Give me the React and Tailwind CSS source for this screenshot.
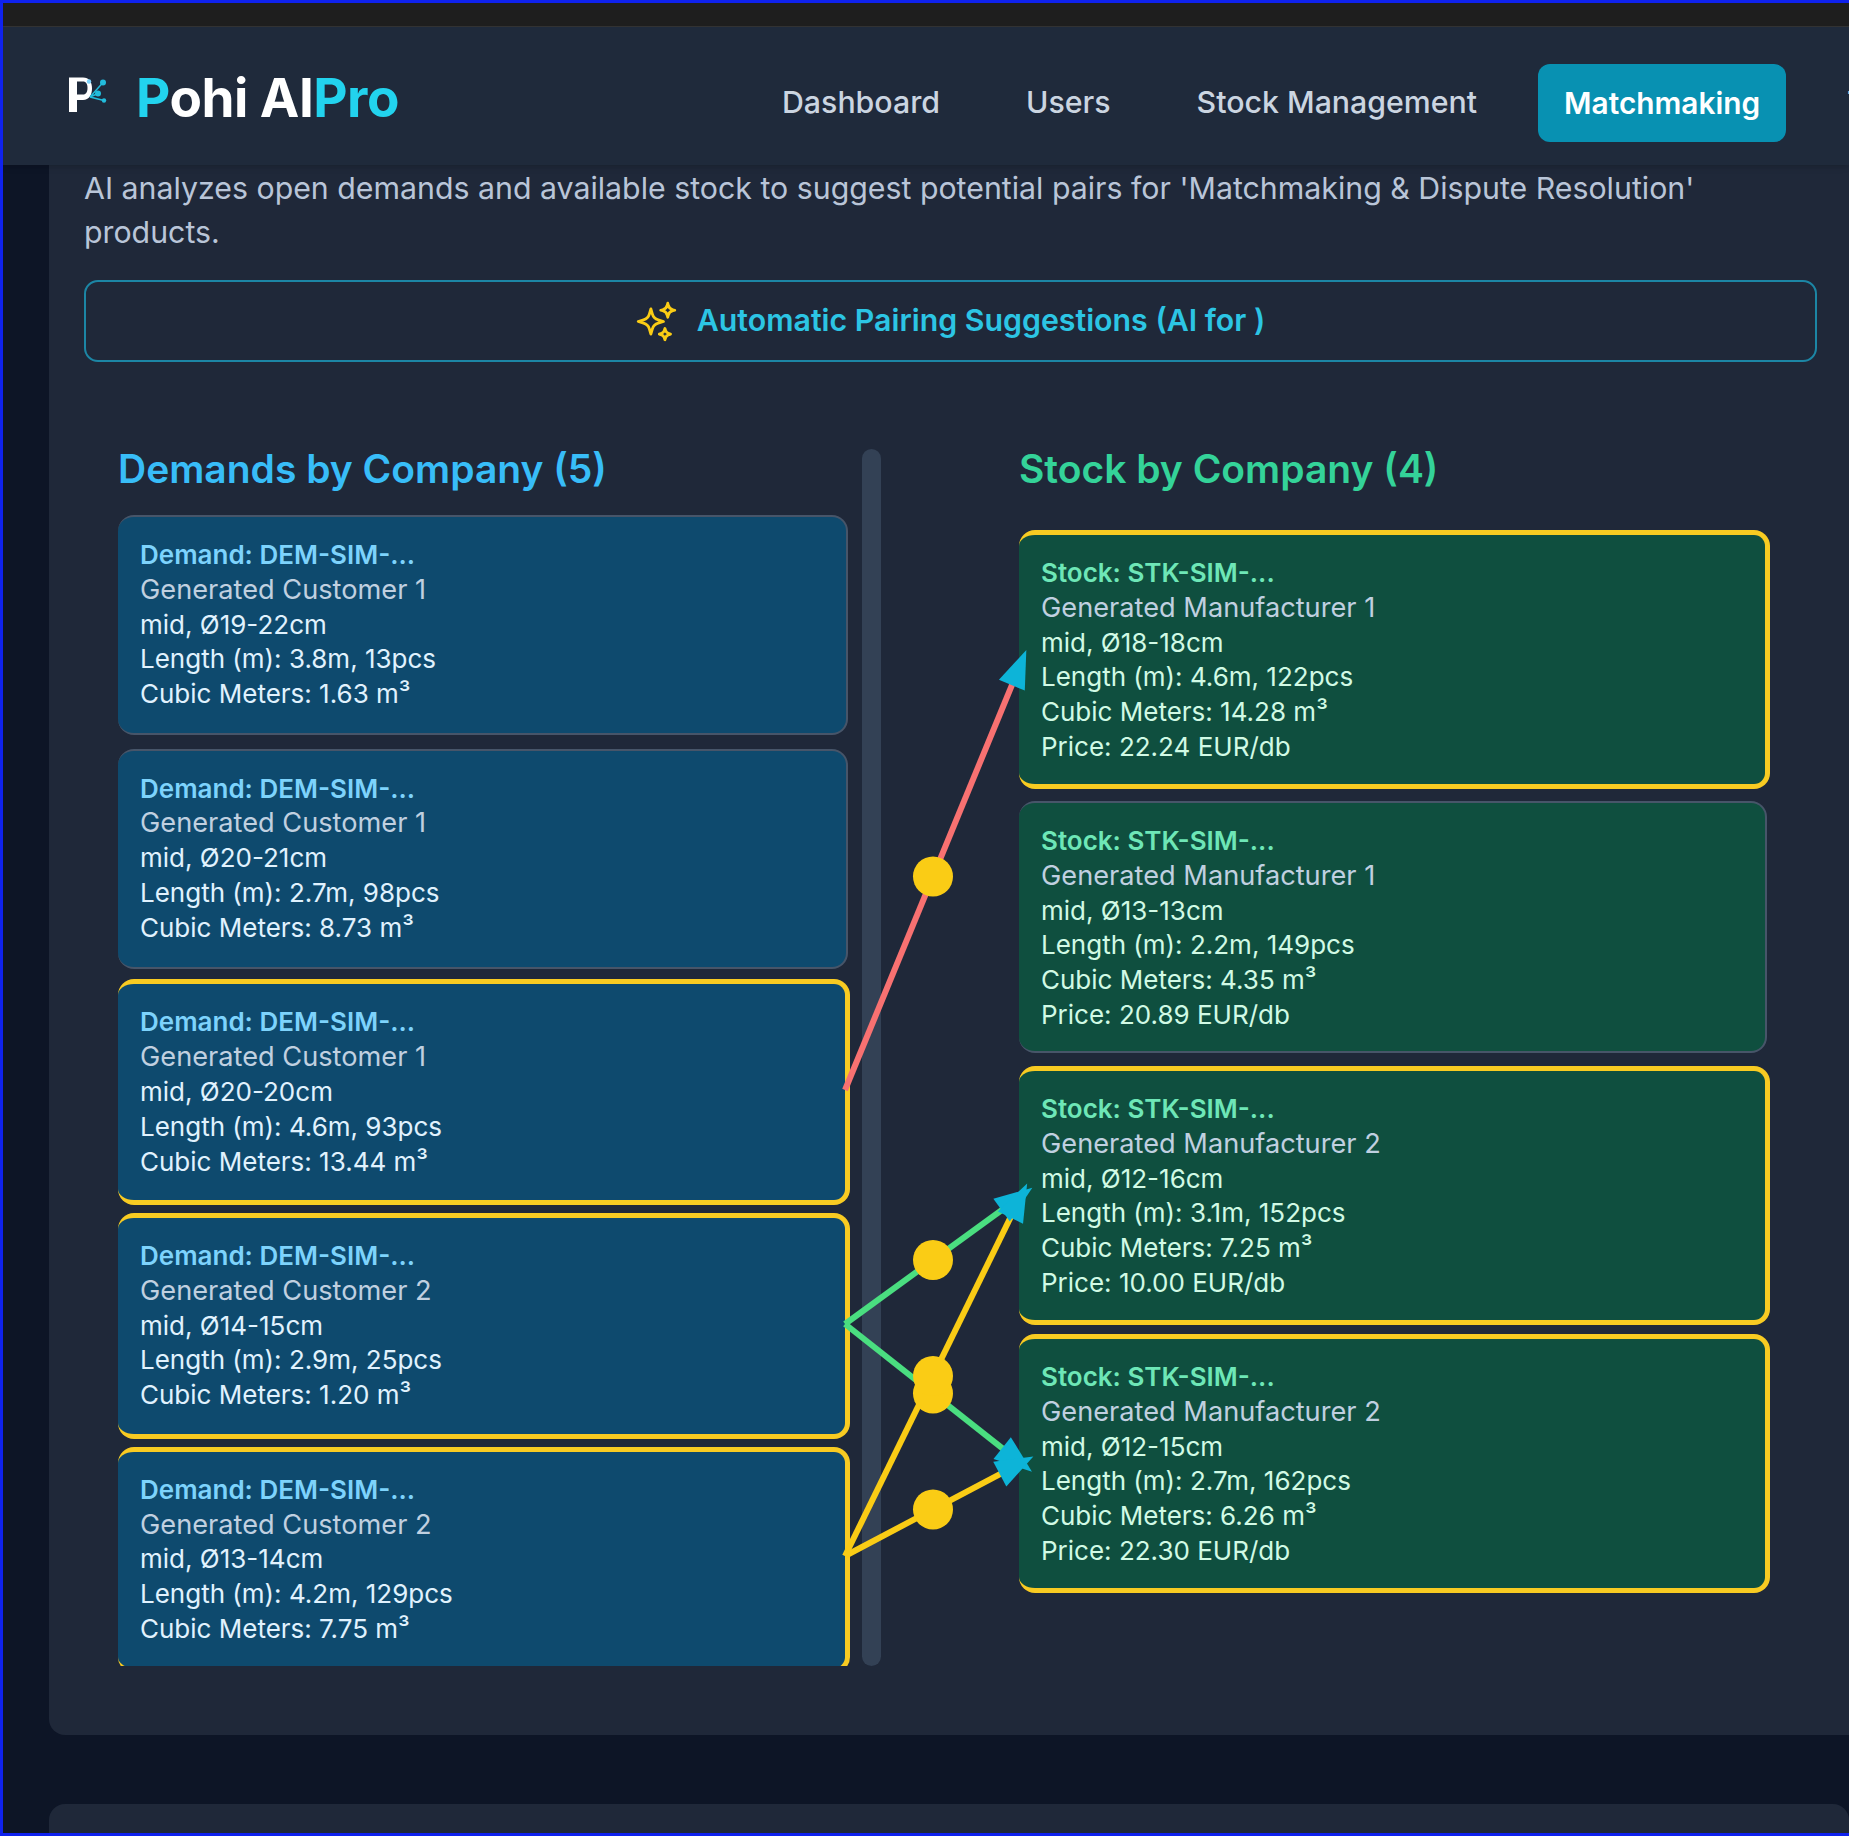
const demands = [
  { id: 1, customer: 'Generated Customer 1', size: 'mid, Ø19-22cm', length: 'Length (m): 3.8m, 13pcs', cubic: 'Cubic Meters: 1.63 m³', selected: false },
  { id: 2, customer: 'Generated Customer 1', size: 'mid, Ø20-21cm', length: 'Length (m): 2.7m, 98pcs', cubic: 'Cubic Meters: 8.73 m³', selected: false },
  { id: 3, customer: 'Generated Customer 1', size: 'mid, Ø20-20cm', length: 'Length (m): 4.6m, 93pcs', cubic: 'Cubic Meters: 13.44 m³', selected: true },
  { id: 4, customer: 'Generated Customer 2', size: 'mid, Ø14-15cm', length: 'Length (m): 2.9m, 25pcs', cubic: 'Cubic Meters: 1.20 m³', selected: true },
  { id: 5, customer: 'Generated Customer 2', size: 'mid, Ø13-14cm', length: 'Length (m): 4.2m, 129pcs', cubic: 'Cubic Meters: 7.75 m³', selected: true },
];

const stock = [
  { id: 1, maker: 'Generated Manufacturer 1', size: 'mid, Ø18-18cm', length: 'Length (m): 4.6m, 122pcs', cubic: 'Cubic Meters: 14.28 m³', price: 'Price: 22.24 EUR/db', selected: true },
  { id: 2, maker: 'Generated Manufacturer 1', size: 'mid, Ø13-13cm', length: 'Length (m): 2.2m, 149pcs', cubic: 'Cubic Meters: 4.35 m³', price: 'Price: 20.89 EUR/db', selected: false },
  { id: 3, maker: 'Generated Manufacturer 2', size: 'mid, Ø12-16cm', length: 'Length (m): 3.1m, 152pcs', cubic: 'Cubic Meters: 7.25 m³', price: 'Price: 10.00 EUR/db', selected: true },
  { id: 4, maker: 'Generated Manufacturer 2', size: 'mid, Ø12-15cm', length: 'Length (m): 2.7m, 162pcs', cubic: 'Cubic Meters: 6.26 m³', price: 'Price: 22.30 EUR/db', selected: true },
];

// page coordinates of the pairing lines
const links = [
  { x1: 845, y1: 1090, x2: 1021, y2: 663, color: '#f87171' },
  { x1: 845, y1: 1324, x2: 1021, y2: 1196, color: '#4ade80' },
  { x1: 845, y1: 1324, x2: 1021, y2: 1463, color: '#4ade80' },
  { x1: 845, y1: 1556, x2: 1021, y2: 1196, color: '#facc15' },
  { x1: 845, y1: 1556, x2: 1021, y2: 1463, color: '#facc15' },
];

const arrowPoints = ({ x1, y1, x2, y2 }) => {
  const len = Math.hypot(x2 - x1, y2 - y1);
  const dx = (x2 - x1) / len;
  const dy = (y2 - y1) / len;
  const bx = x2 - dx * 24;
  const by = y2 - dy * 24;
  return [
    [x2 + dx * 14, y2 + dy * 14],
    [bx - dy * 14, by + dx * 14],
    [bx + dy * 14, by - dx * 14],
  ].map((p) => p.join(',')).join(' ');
};

const Logo = () => (
  <svg width="56" height="44" viewBox="0 0 56 44" className="shrink-0">
    <path d="M4 4.500H18C24 4.500 27 9 27 15.500C27 22 24 27 18 27H12V39H4Z" fill="#fff" />
    <path d="M12 8.500H18C21 8.500 22.500 11 22.500 15S21 21.500 18 21.500H12Z" fill="#1f2a3b" />
    <path d="M25 24L38 9.500M25 24L33 20.500M25 24L39 27.500" stroke="#22bcdc" strokeWidth="1.500" fill="none" />
    <circle cx="38" cy="9.500" r="3" fill="#22bcdc" />
    <circle cx="33" cy="20.500" r="3" fill="#22bcdc" />
    <circle cx="39" cy="27.500" r="2.200" fill="#22bcdc" />
    <circle cx="24" cy="8.500" r="2.200" fill="#7dd3fc" />
  </svg>
);

const Sparkles = () => (
  <svg width="45" height="45" viewBox="0 0 24 24" fill="none" stroke="#facc15" strokeWidth="1.5" strokeLinecap="round" strokeLinejoin="round" className="shrink-0">
    <path d="M9.813 15.904 9 18.75l-.813-2.846a4.5 4.5 0 0 0-3.09-3.09L2.25 12l2.846-.813a4.5 4.5 0 0 0 3.09-3.09L9 5.25l.813 2.846a4.5 4.5 0 0 0 3.09 3.09L15.75 12l-2.846.813a4.5 4.5 0 0 0-3.09 3.09ZM18.259 8.715 18 9.75l-.259-1.035a3.375 3.375 0 0 0-2.455-2.456L14.25 6l1.036-.259a3.375 3.375 0 0 0 2.455-2.456L18 2.250l.259 1.035a3.375 3.375 0 0 0 2.456 2.456L21.750 6l-1.035.259a3.375 3.375 0 0 0-2.456 2.456ZM16.894 20.567 16.500 21.750l-.394-1.183a2.250 2.250 0 0 0-1.423-1.423L13.500 18.750l1.183-.394a2.250 2.250 0 0 0 1.423-1.423l.394-1.183.394 1.183a2.250 2.250 0 0 0 1.423 1.423l1.183.394-1.183.394a2.250 2.250 0 0 0-1.423 1.423Z" />
  </svg>
);

const DemandCard = ({ item }) => (
  <div className={`shrink-0 rounded-[16px] bg-[#0e4a6e] pl-[22px] pt-[21px] text-[26px] leading-[34.800px] border-l-0 ${item.selected ? 'h-[226px] w-[732px] -my-[3px] border-t-[5px] border-r-[5px] border-b-[5px] border-[#f8cb22]' : 'h-[220px] w-[730px] border-t-2 border-r-2 border-b-2 border-[#475569]'}`}>
    <div className="font-semibold text-[#7dd3fc]">Demand: DEM-SIM-...</div>
    <div className="text-[27.200px] text-[#c0d0e0]">{item.customer}</div>
    <div className="text-[#e0f2fe]">{item.size}</div>
    <div className="text-[#e0f2fe]">{item.length}</div>
    <div className="text-[#e0f2fe]">{item.cubic}</div>
  </div>
);

const StockCard = ({ item }) => (
  <div className={`shrink-0 rounded-[16px] bg-[#0f4f3f] pl-[22px] pt-[21px] text-[26px] leading-[34.800px] border-l-0 ${item.selected ? 'h-[259px] w-[751px] -mt-[3px] -mb-[4px] border-t-[5px] border-r-[5px] border-b-[5px] border-[#f8cb22]' : 'h-[252px] w-[748px] border-t-2 border-r-2 border-b-2 border-[#475569]'}`}>
    <div className="font-semibold text-[#6ee7b7]">Stock: STK-SIM-...</div>
    <div className="text-[27.200px] text-[#c0d0e0]">{item.maker}</div>
    <div className="text-[#d1fae5]">{item.size}</div>
    <div className="text-[#d1fae5]">{item.length}</div>
    <div className="text-[#d1fae5]">{item.cubic}</div>
    <div className="text-[#d1fae5]">{item.price}</div>
  </div>
);

export default function App() {
  return (
    <div className="relative w-[1849px] h-[1836px] overflow-hidden flex flex-col bg-[#0d1526] border-t-[3px] border-l-[3px] border-b-[3px] border-[#0f22ee] font-['Inter',sans-serif]">
      <div className="h-[24px] shrink-0 bg-[#1e1e1e] border-b border-[#333333]" />

      <header className="h-[138px] shrink-0 bg-[#1f2a3b] flex items-center pl-[62px] shadow-md z-10">
        <div className="flex items-center w-[711px] shrink-0 -mt-[3px]">
          <Logo />
          <span className="ml-[15px] mt-[7px] text-[53px] font-bold leading-none text-white tracking-[-0.5px]">
            <span className="text-[#22d3ee]">P</span>ohi AI<span className="text-[#22d3ee]">Pro</span>
          </span>
        </div>
        <nav className="mt-[14px] shrink-0 flex items-center whitespace-nowrap text-[30.300px] font-medium text-[#cbd5e1]">
          <span className="px-[6px]">Dashboard</span>
          <span className="ml-[74px] px-[6px]">Users</span>
          <span className="ml-[74px] px-[6px]">Stock Management</span>
          <span className="ml-[55px] w-[248px] h-[78px] flex items-center justify-center rounded-[12px] bg-[#0891b2] text-[29.800px] font-semibold text-white">Matchmaking</span>
          <span className="ml-[61px]">Transactions</span>
        </nav>
      </header>

      <main className="flex-1 min-h-0 flex flex-col">
        <section className="ml-[46px] w-[1830px] h-[1570px] shrink-0 rounded-b-[16px] bg-[#1f2839] pl-[35px]">
          <p className="pt-[2px] w-[1730px] text-[30.300px] leading-[43.500px] text-[#b9c5d8]">
            AI analyzes open demands and available stock to suggest potential pairs for 'Matchmaking &amp; Dispute Resolution' products.
          </p>
          <button className="mt-[26px] w-[1733px] h-[82px] pr-[2px] flex items-center justify-center gap-[18px] rounded-[14px] border-2 border-[#1c86a5] text-[30.300px] font-semibold text-[#2cc5e4]">
            <Sparkles />
            Automatic Pairing Suggestions (AI for )
          </button>

          <div className="mt-[87px] flex">
            <div className="w-[778px] shrink-0 pl-[34px] flex">
              <div className="w-[744px] shrink-0">
                <h2 className="text-[39px] leading-[40px] font-semibold text-[#38bdf8]">Demands by Company (5)</h2>
                <div className="mt-[26px] h-[1151px] overflow-hidden flex flex-col gap-[13.700px]">
                  {demands.map((item) => <DemandCard key={item.id} item={item} />)}
                </div>
              </div>
              <div className="w-[19px] h-[1217px] shrink-0 rounded-full bg-[#334155]" />
            </div>
            <div className="ml-[157px]">
              <h2 className="text-[39px] leading-[40px] font-semibold text-[#34d399]">Stock by Company (4)</h2>
              <div className="mt-[44px] flex flex-col gap-[16px]">
                {stock.map((item) => <StockCard key={item.id} item={item} />)}
              </div>
            </div>
          </div>
        </section>
        <section className="mt-[69px] ml-[46px] flex-1 rounded-t-[16px] bg-[#1f2839]" />
      </main>

      {/* pairing lines lie over the columns */}
      <svg width="1849" height="1836" className="absolute -left-[3px] -top-[3px] pointer-events-none z-20">
        {links.map((l, i) => (
          <line key={i} x1={l.x1} y1={l.y1} x2={l.x2} y2={l.y2} stroke={l.color} strokeWidth="6" />
        ))}
        {links.map((l, i) => (
          <polygon key={i} points={arrowPoints(l)} fill="#0db4d8" />
        ))}
        {links.map((l, i) => (
          <circle key={i} cx={(l.x1 + l.x2) / 2} cy={(l.y1 + l.y2) / 2} r="20" fill="#facc15" />
        ))}
      </svg>
    </div>
  );
}
